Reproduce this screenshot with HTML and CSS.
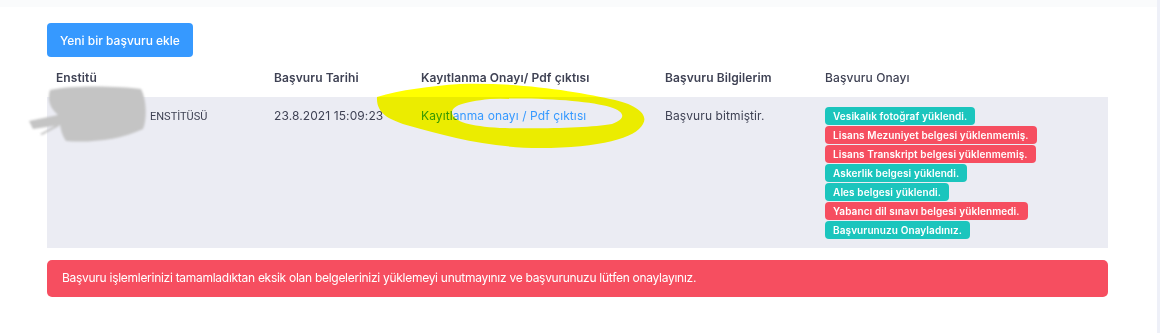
FILE: index.html
```html
<!DOCTYPE html>
<html>
<head>
    <meta charset="utf-8">
    <link rel="stylesheet" href="styles.css">
</head>
<body>
    <div class="page">
        <div class="content">
            <button class="btn btn-primary">Yeni bir başvuru ekle</button>

            <table class="apps">
                <colgroup>
                    <col class="col-ens">
                    <col class="col-date">
                    <col class="col-pdf">
                    <col class="col-info">
                    <col class="col-state">
                </colgroup>
                <thead>
                    <tr>
                        <th>Enstitü</th>
                        <th>Başvuru Tarihi</th>
                        <th>Kayıtlanma Onayı/ Pdf çıktısı</th>
                        <th>Başvuru Bilgilerim</th>
                        <th class="th-light">Başvuru Onayı</th>
                    </tr>
                </thead>
                <tbody>
                    <tr>
                        <td><span class="ens-name">ENSTİTÜSÜ</span></td>
                        <td>23.8.2021 15:09:23</td>
                        <td><a href="#" class="pdf-link">Kayıtlanma onayı / Pdf çıktısı</a></td>
                        <td>Başvuru bitmiştir.</td>
                        <td>
                            <div class="badges">
                                <span class="badge badge-success">Vesikalık fotoğraf yüklendi.</span>
                                <span class="badge badge-danger">Lisans Mezuniyet belgesi yüklenmemiş.</span>
                                <span class="badge badge-danger">Lisans Transkript belgesi yüklenmemiş.</span>
                                <span class="badge badge-success">Askerlik belgesi yüklendi.</span>
                                <span class="badge badge-success">Ales belgesi yüklendi.</span>
                                <span class="badge badge-danger">Yabancı dil sınavı belgesi yüklenmedi.</span>
                                <span class="badge badge-success">Başvurunuzu Onayladınız.</span>
                            </div>
                        </td>
                    </tr>
                </tbody>
            </table>

            <div class="alert alert-danger">
                Başvuru işlemlerinizi tamamladıktan eksik olan belgelerinizi yüklemeyi unutmayınız ve başvurunuzu lütfen onaylayınız.
            </div>

            <!-- karalama: enstitü adı gizlendi -->
            <svg class="redact" width="130" height="70" viewBox="20 80 130 70">
                <defs>
                    <filter id="soft"><feGaussianBlur stdDeviation="1"/></filter>
                </defs>
                <g filter="url(#soft)" fill="#c4c4c4">
                    <path d="M50 90 C70 85 120 86 141 89 C147 100 147 120 143 129 C120 140 90 143 66 141 C62 135 61 130 60 125 L33 129 L29 121 L58 115 C50 108 47 100 50 90 Z"/>
                    <path d="M40 134 L58 124 L59 126 L42 135 Z"/>
                </g>
            </svg>

            <!-- fosforlu kalem işareti -->
            <svg class="highlight" width="280" height="70" viewBox="372 80 280 70">
                <path fill="#ffff00" fill-rule="evenodd"
                      d="M377 97 C400 90 430 86 460 84 C520 82 580 92 615 100 C640 106 648 116 643 124 C636 138 600 148 540 148 C490 148 445 136 410 126 C390 120 376 114 377 97 Z
                         M452 113 C452 106 462 102 490 99 C540 97 590 101 610 107 C626 112 626 119 612 124 C590 128 540 129 500 128 C470 126 454 122 452 113 Z"/>
            </svg>
        </div>
        <div class="side"></div>
    </div>
</body>
</html>
```

FILE: styles.css
```css
body {
    margin: 0;
    font-family: Inter, 'Noto Sans', sans-serif;
    color: #3f4254;
    background: #eef0f8;
}

.page {
    display: flex;
    height: 333px;
}

.content {
    position: relative;
    flex: 1;
    padding: 23px 49px 0 47px;
    background: linear-gradient(#fafbfc 0, #fafbfc 7px, #fff 7px);
}

.side {
    width: 3px;
}

.btn {
    font-family: inherit;
    font-size: 12px;
    font-weight: 500;
    border: none;
    border-radius: 4px;
    height: 34px;
    padding: 0 13px;
    cursor: pointer;
}

.btn-primary {
    background: #3699ff;
    color: #fff;
}

.apps {
    width: 100%;
    margin-top: 5px;
    border-collapse: collapse;
    table-layout: fixed;
    font-size: 12px;
}

.col-ens { width: 218px; }
.col-date { width: 147px; }
.col-pdf { width: 244px; }
.col-info { width: 160px; }

.apps th {
    text-align: left;
    font-weight: 600;
    color: #3f4254;
    line-height: 18px;
    padding: 7px 9px 10px;
    letter-spacing: 0.1px;
}

.apps th.th-light {
    font-weight: 500;
}

.apps td {
    background: #ebecf3;
    vertical-align: top;
    line-height: 18px;
    padding: 10px 9px 9px;
    letter-spacing: 0.1px;
}

.ens-name {
    display: inline-block;
    padding-left: 94px;
    font-family: Roboto, sans-serif;
    font-size: 11px;
    letter-spacing: 0;
}

.pdf-link {
    color: #3699ff;
    text-decoration: none;
}

.badges {
    display: flex;
    flex-direction: column;
    align-items: flex-start;
    gap: 1px;
}

.badge {
    height: 18px;
    line-height: 18px;
    padding: 0 8px;
    border-radius: 4px;
    color: #fff;
    font-size: 10px;
    font-weight: 600;
}

.badge-success {
    background: #1bc5bd;
}

.badge-danger {
    background: #f64e60;
}

.alert {
    margin-top: 12px;
    padding: 9px 15px 10px;
    border-radius: 5px;
    font-size: 12px;
    line-height: 18px;
    letter-spacing: -0.28px;
}

.alert-danger {
    background: #f64e60;
    color: #fff;
}

.redact {
    position: absolute;
    left: 20px;
    top: 80px;
}

.highlight {
    position: absolute;
    left: 372px;
    top: 80px;
    mix-blend-mode: multiply;
}
```
